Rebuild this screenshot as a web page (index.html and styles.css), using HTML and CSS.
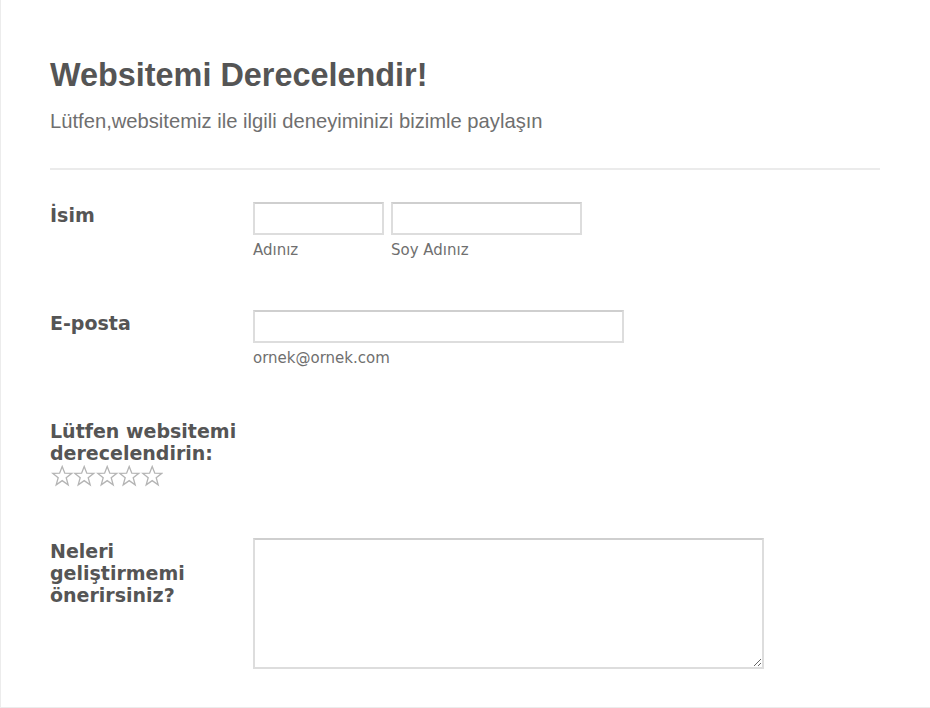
FILE: index.html
```html
<!DOCTYPE html>
<html lang="tr">
<head>
<meta charset="utf-8">
<title>Websitemi Derecelendir!</title>
<link rel="stylesheet" href="styles.css">
</head>
<body>
<div class="form">
  <header class="header">
    <h1 class="title">Websitemi Derecelendir!</h1>
    <p class="subtitle">Lütfen,websitemiz ile ilgili deneyiminizi bizimle paylaşın</p>
  </header>
  <div class="rows">
    <div class="row">
      <label class="label">İsim</label>
      <div class="field">
        <div class="name-group">
          <div class="sub">
            <input class="input first" type="text">
            <span class="sublabel">Adınız</span>
          </div>
          <div class="sub">
            <input class="input last" type="text">
            <span class="sublabel">Soy Adınız</span>
          </div>
        </div>
      </div>
    </div>
    <div class="row">
      <label class="label">E-posta</label>
      <div class="field">
        <div class="sub">
          <input class="input email" type="email">
          <span class="sublabel">ornek@ornek.com</span>
        </div>
      </div>
    </div>
    <div class="row">
      <div class="label-block">
        <label class="label">Lütfen websitemi derecelendirin:</label>
        <div class="stars">
          <svg class="star" viewBox="0 0 22 22" width="22" height="22"><polygon points="11,1.5 13.6,8.2 20.6,8.3 15,12.7 17,19.8 11,15.6 5,19.8 7,12.7 1.4,8.3 8.4,8.2"/></svg>
          <svg class="star" viewBox="0 0 22 22" width="22" height="22"><polygon points="11,1.5 13.6,8.2 20.6,8.3 15,12.7 17,19.8 11,15.6 5,19.8 7,12.7 1.4,8.3 8.4,8.2"/></svg>
          <svg class="star" viewBox="0 0 22 22" width="22" height="22"><polygon points="11,1.5 13.6,8.2 20.6,8.3 15,12.7 17,19.8 11,15.6 5,19.8 7,12.7 1.4,8.3 8.4,8.2"/></svg>
          <svg class="star" viewBox="0 0 22 22" width="22" height="22"><polygon points="11,1.5 13.6,8.2 20.6,8.3 15,12.7 17,19.8 11,15.6 5,19.8 7,12.7 1.4,8.3 8.4,8.2"/></svg>
          <svg class="star" viewBox="0 0 22 22" width="22" height="22"><polygon points="11,1.5 13.6,8.2 20.6,8.3 15,12.7 17,19.8 11,15.6 5,19.8 7,12.7 1.4,8.3 8.4,8.2"/></svg>
        </div>
      </div>
    </div>
    <div class="row">
      <label class="label">Neleri geliştirmemi önerirsiniz?</label>
      <div class="field">
        <textarea class="textarea"></textarea>
      </div>
    </div>
  </div>
</div>
</body>
</html>
```

FILE: styles.css
```css
html, body {
  margin: 0;
  padding: 0;
  background: #ffffff;
}

.form {
  box-sizing: border-box;
  height: 708px;
  border-left: 1px solid #ececec;
  border-bottom: 1px solid #ececec;
  padding: 0 50px 0 49px;
  overflow: hidden;
}

.header {
  padding-top: 56px;
  padding-bottom: 35px;
  border-bottom: 2px solid #ebebeb;
}

.title {
  margin: 0;
  font-family: "Liberation Sans", Arial, sans-serif;
  font-size: 32.4px;
  line-height: 38px;
  font-weight: bold;
  color: #555555;
}

.subtitle {
  margin: 15px 0 0;
  font-family: "Liberation Sans", Arial, sans-serif;
  font-size: 20.2px;
  line-height: 24px;
  color: #6f6f6f;
}

.rows {
  padding-top: 32px;
  display: flex;
  flex-direction: column;
  gap: 51px;
}

.row {
  display: grid;
  grid-template-columns: 203px 1fr;
  align-items: start;
}

.label {
  display: block;
  padding-top: 2px;
  font-family: "DejaVu Sans", Verdana, sans-serif;
  font-weight: bold;
  font-size: 19px;
  line-height: 22px;
  color: #555555;
}

.label-block .label {
  width: 200px;
}

.stars {
  display: flex;
  height: 23px;
  align-items: center;
  margin-left: 1px;
}

.star {
  display: block;
  width: 22.4px;
  height: 22px;
}

.star polygon {
  fill: #ffffff;
  stroke: #b4b4b4;
  stroke-width: 1.3;
  stroke-linejoin: miter;
}

.field {
  display: flex;
}

.name-group {
  display: flex;
  gap: 7px;
}

.sub {
  display: flex;
  flex-direction: column;
}

.input {
  box-sizing: border-box;
  height: 33px;
  margin: 0;
  padding: 4px 6px;
  border: 2px solid #dddddd;
  border-top-color: #cfcfcf;
  background: #ffffff;
  font-family: "DejaVu Sans", Verdana, sans-serif;
  font-size: 15px;
  outline: none;
}

.first { width: 131px; }
.last { width: 191px; }
.email { width: 371px; }

.sublabel {
  margin-top: 6px;
  font-family: "DejaVu Sans", Verdana, sans-serif;
  font-size: 15px;
  line-height: 18px;
  color: #6f6f6f;
}

.textarea {
  box-sizing: border-box;
  display: block;
  width: 511px;
  height: 131px;
  margin: 0;
  padding: 4px 6px;
  border: 2px solid #dddddd;
  border-top-color: #cfcfcf;
  background: #ffffff;
  font-family: "DejaVu Sans", Verdana, sans-serif;
  font-size: 15px;
  outline: none;
}
```
